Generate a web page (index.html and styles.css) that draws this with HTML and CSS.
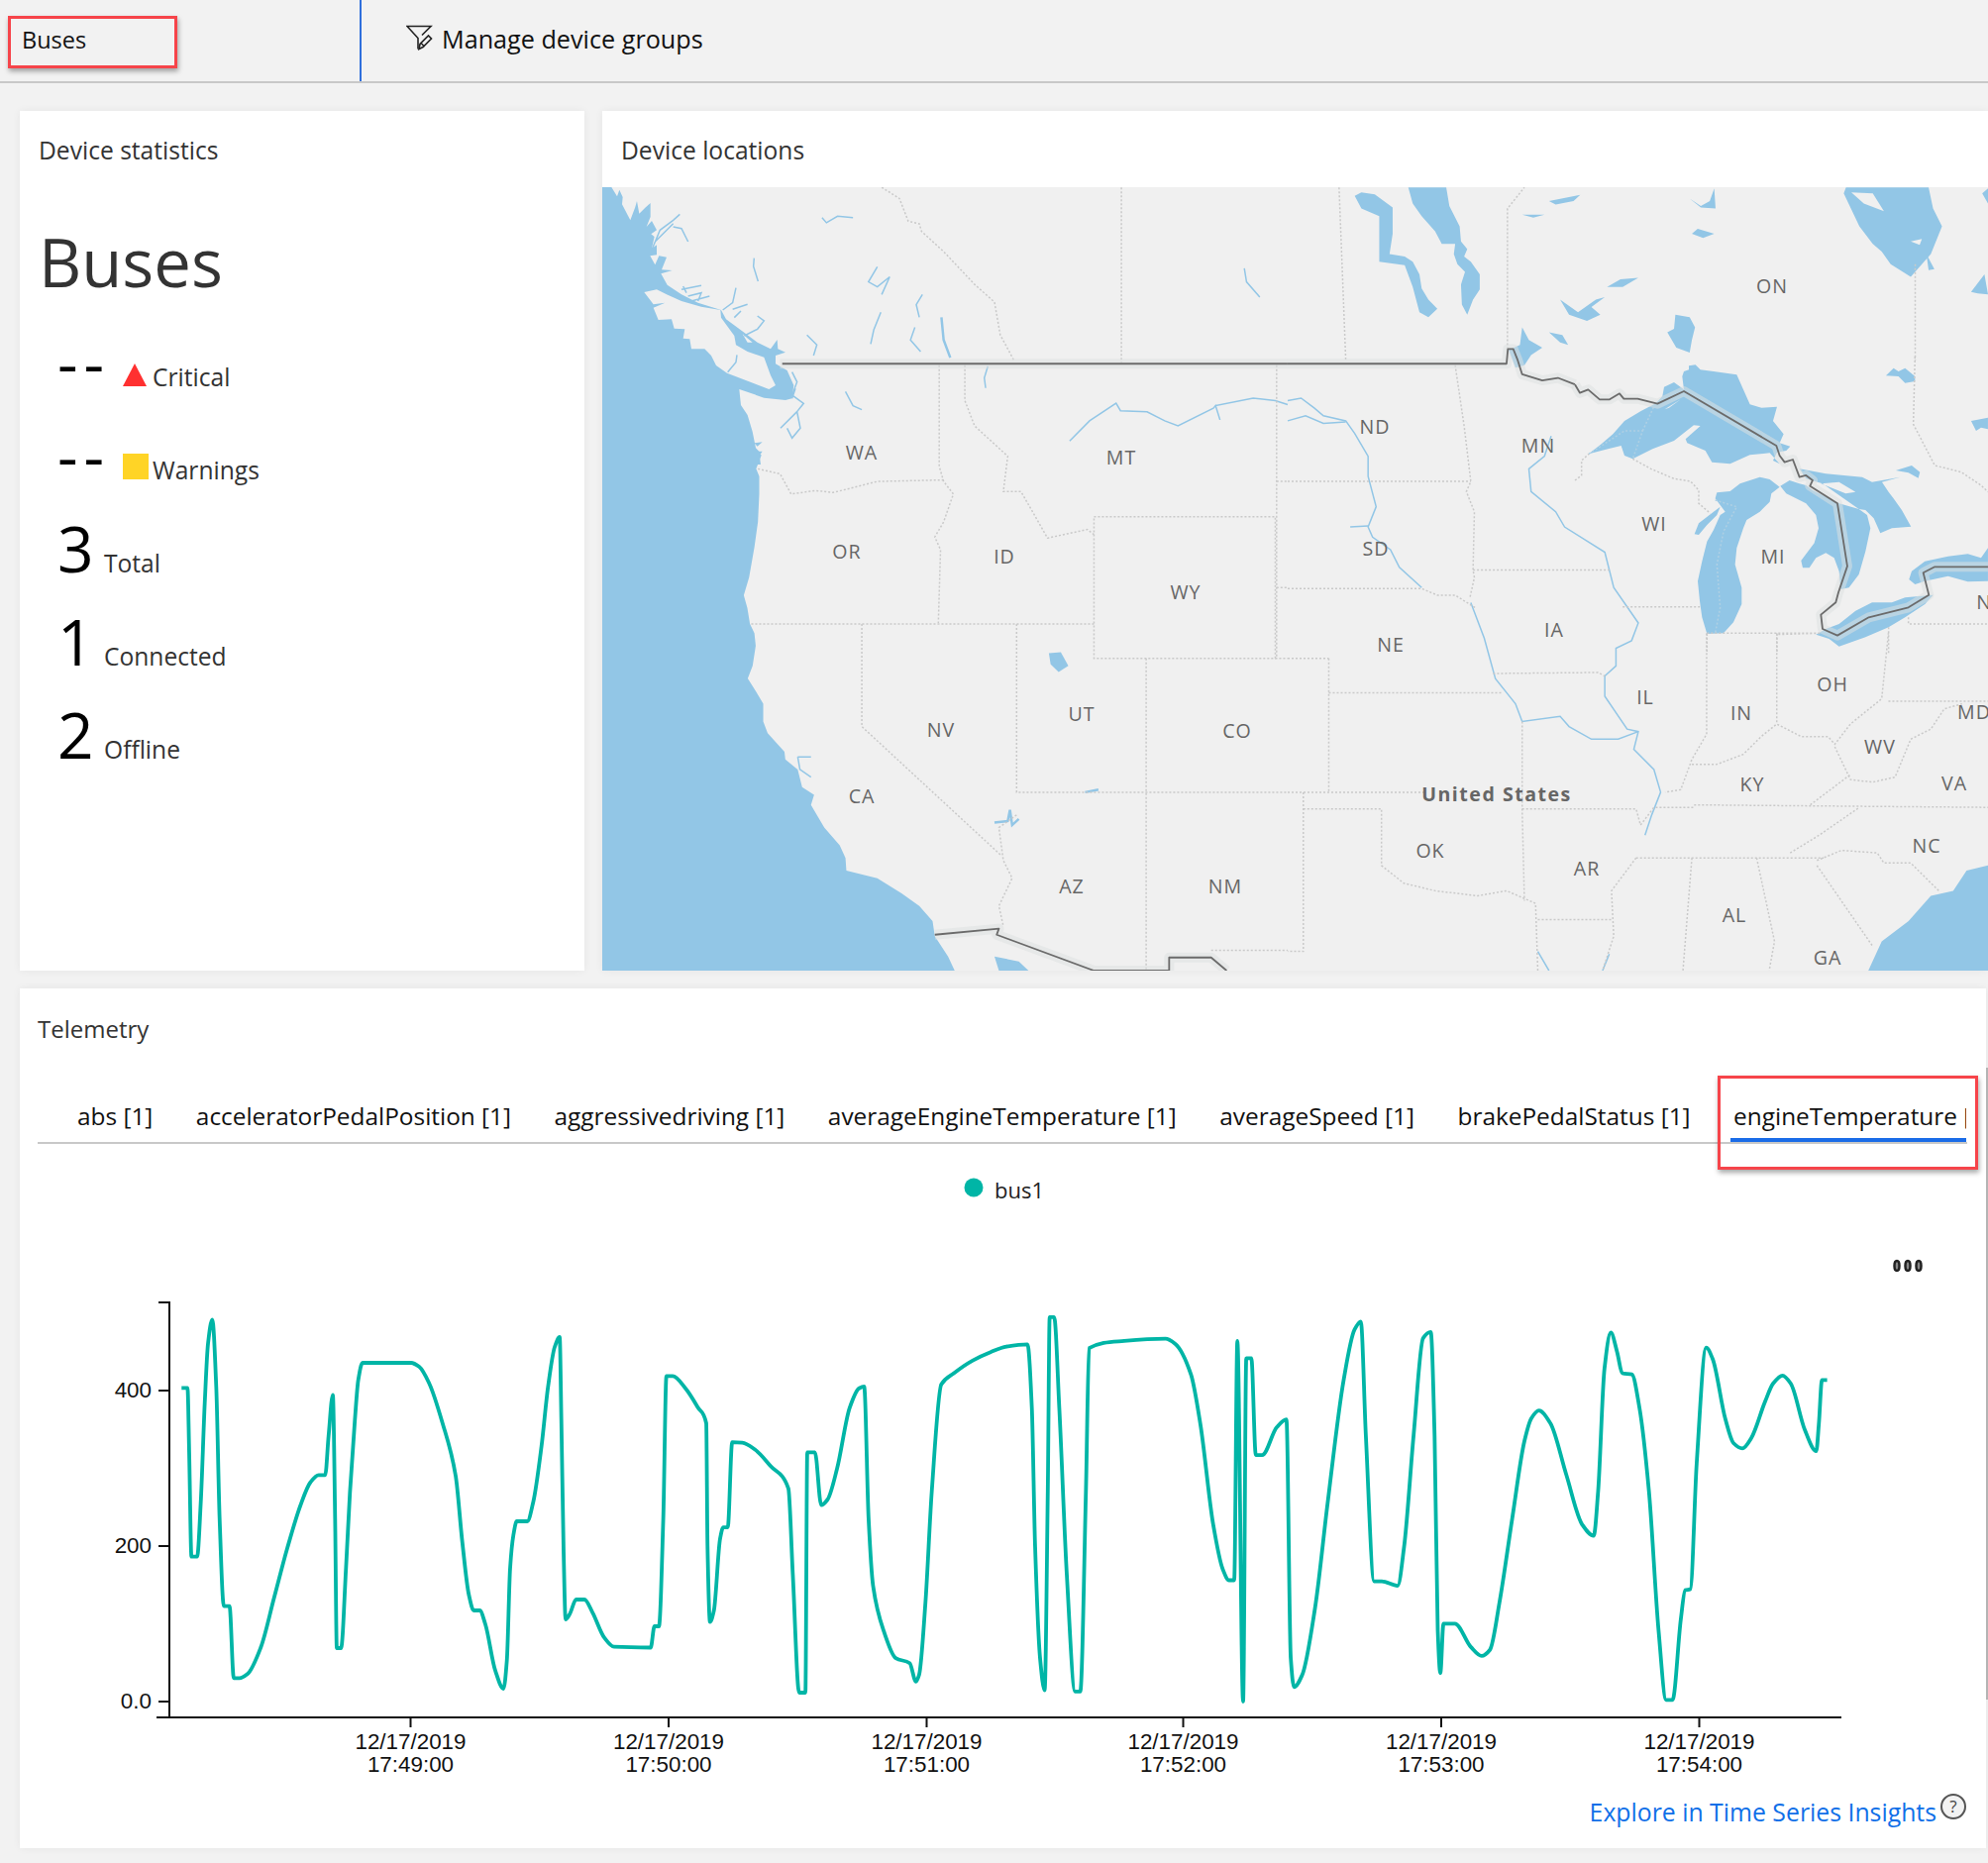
FILE: index.html
```html
<!DOCTYPE html>
<html lang="en">
<head>
  <meta charset="UTF-8">
  <title>Buses</title>
  <link rel="stylesheet" href="styles.css">
</head>
<body>
  <div class="topbar">
    <div class="group-picker">
      <div class="red-box picker-box">Buses</div>
    </div>
    <div class="manage">
      <svg class="filter-icon" width="28" height="26" viewBox="0 0 28 26">
        <path d="M16 10.5l9-9H1l11 12v11"/>
        <path d="M13 24.5l1-5 8.500-8.500 3 3-8.500 8.500z"/>
        <path d="M15 18.500l3.500 3.500"/>
      </svg>
      <span>Manage device groups</span>
    </div>
  </div>

  <div class="top-row">
    <div class="panel stats">
      <div class="panel-title">Device statistics</div>
      <div class="stats-name">Buses</div>
      <div class="stat-row">
        <span class="stat-num dashes">--</span>
        <span class="triangle"></span>
        <span class="stat-label">Critical</span>
      </div>
      <div class="stat-row">
        <span class="stat-num dashes">--</span>
        <span class="square"></span>
        <span class="stat-label">Warnings</span>
      </div>
      <div class="stat-row"><span class="stat-num">3</span><span class="stat-label">Total</span></div>
      <div class="stat-row"><span class="stat-num">1</span><span class="stat-label">Connected</span></div>
      <div class="stat-row"><span class="stat-num">2</span><span class="stat-label">Offline</span></div>
    </div>

    <div class="panel locations">
      <div class="panel-title">Device locations</div>
      <svg class="map" width="1399" height="791" viewBox="608 189 1399 791">
        <!-- pacific northwest -->
        <g transform="translate(608 189) scale(.3333)">
          <path class="water" fill-rule="evenodd" d="M0 0H28L45 28 52 8 62 30 60 52 85 100 100 60 105 42 112 80 130 62 146 48 146 90 134 120 150 102 165 130 148 142 158 150 150 186 165 175 165 205 145 208 160 235 172 208 195 212 180 250 212 252 178 262 197 296 240 325 290 350 360 372 375 400 430 440 470 470 510 490 530 462 532 490 555 500 525 510 525 535 560 555 580 600 575 640 555 645 490 638 415 612 420 660 440 690 455 740 465 790 475 800 480 840H0ZM127 318L165 310 195 325 240 345 300 362 358 372 360 395 400 450 405 478 440 498 490 515 510 570 525 600 505 612 378 563 345 540 330 510 310 490 270 490 265 460 245 458 250 430 218 428 210 400 170 402 155 365 190 350 155 355ZM425 445L455 470 440 470Z"/>
          <path class="river" d="M150 190L175 130 215 100 235 82M215 120L240 125 260 165M160 165L215 110"/>
          <path class="river" d="M245 300L255 320M240 310L300 298M260 330L300 320 290 345M270 345L325 330"/>
          <path class="river" d="M365 372L395 350 405 305M395 370L440 355M400 395L420 375"/>
          <path class="river" d="M470 390L490 405 470 430 430 450"/>
          <path class="river" d="M575 560L590 590 575 630 610 655 590 680 600 730 575 760 560 730M590 680L540 730M575 640L585 610"/>
          <path class="river" d="M460 215L458 240 472 285"/>
          <path class="river" d="M620 448L650 478 640 510"/>
          <path class="river" d="M408 508L405 530 380 560"/>
          <path class="water" d="M460 775L485 772 470 785ZM470 800L485 800 475 815Z"/>
        </g>

        <!-- west half -->
        <g transform="translate(600 180) scale(.4464 .5102)">
          <path class="water" d="M0 540H365L378 548 366 575 373 590 373 625 370 680 362 730 350 790 338 825 346 850 352 882 362 900 365 925 358 965 347 990 365 1015 382 1040 382 1075 392 1098 430 1135 432 1150 460 1170 470 1205 497 1220 490 1240 520 1285 555 1320 568 1345 570 1370 640 1385 695 1415 735 1440 765 1470 770 1500 800 1540 815 1568H0Z"/>
          <path class="water" d="M1028 940L1055 938 1072 965 1050 977 1032 962Z"/>
          <path class="water" d="M905 1540L960 1550 982 1568H915Z"/>
          <path class="river" d="M515 78L525 88 550 75 585 78"/>
          <path class="river" d="M640 175L620 205 640 215 668 195 650 230"/>
          <path class="river" d="M648 265L632 300 625 328"/>
          <path class="river" d="M742 230L728 250 735 275"/>
          <path class="river" d="M725 295L715 320 738 343"/>
          <path class="river wide" d="M785 275L790 320 805 355"/>
          <path class="river" d="M890 372L882 395 885 415"/>
          <path class="river" d="M568 422L585 450 605 458"/>
          <path class="river" d="M1470 178L1475 205 1505 235"/>
          <path class="river" d="M1075 520L1120 480 1180 445 1190 460 1250 462 1290 480 1320 490 1400 455 1405 450 1415 478 1405 450 1490 435 1540 440 1568 448"/>
          <path class="river wide" d="M1110 1215L1140 1210"/>
          <path class="river wide" d="M905 1275L935 1272 940 1250 945 1280 960 1268"/>
          <path class="river" d="M460 1145L465 1170 490 1185M460 1145H490"/>

          <path class="border" d="M650 18L690 40 710 85 735 90 740 105 790 145 860 210 905 245 918 310 950 362"/>
          <path class="border" d="M1192 18V365"/>
          <path class="border" d="M780 370V570L790 600 812 625 790 680 770 710 783 735 778 880"/>
          <path class="border" d="M370 575L420 585 445 625 500 618 540 622 640 600 790 597"/>
          <path class="border" d="M355 882H1130"/>
          <path class="border" d="M605 882V1085L920 1340"/>
          <path class="border" d="M838 370V440L860 490 935 550 925 620 965 620 1025 712 1115 695 1130 705"/>
          <path class="border" d="M1130 670H1540V950H1130Z"/>
          <path class="border" d="M1543 370V950"/>
          <path class="border" d="M1543 600H1568M1543 810H1568"/>
          <path class="border" d="M955 882V1215H1568"/>
          <path class="border" d="M1248 950V1568M1540 950H1568"/>
          <path class="border" d="M955 1260L915 1285 925 1350 945 1385 915 1440 925 1480"/>
          <path class="border" d="M1395 1528H1568"/>

          <path class="national-halo" d="M420 367H1568"/>
          <path class="national" d="M425 367H1568"/>
          <path class="national-halo" d="M770 1497L915 1485 910 1497 1130 1568H1300V1542H1395L1430 1568"/>
          <path class="national" d="M770 1497L915 1485 910 1497 1130 1568H1300V1542H1395L1430 1568"/>
        </g>

        <!-- east half -->
        <g transform="translate(1300 180) scale(.4509 .5102)">
          <path class="water" d="M270 18H355L362 55 385 95 388 125 402 140 395 155 410 165 430 190 430 220 415 240 402 270 390 250 388 210 397 185 380 170 372 150 375 130 345 130 330 105 300 75 280 50Z"/>
          <path class="water" d="M150 35L165 28 195 32 235 58 235 110 228 150 262 155 280 165 295 190 300 218 315 240 335 258 315 275 295 265 280 215 262 172 205 165 205 75 165 60Z"/>
          <path class="water" d="M585 45L655 33 640 45 600 52ZM525 72L575 72 550 78ZM900 40L925 55 945 45 955 20 958 60 925 58ZM905 110L918 100 955 110 930 118Z"/>
          <path class="water" d="M850 305L865 298 868 270 900 275 912 295 905 320 900 345 870 335Z"/>
          <path class="water" d="M610 240L650 265 690 240 710 235 680 255 700 270 670 282 630 270ZM715 215L745 200 785 197 750 215Z"/>
          <path class="water" d="M525 295L540 320 570 335 545 350 530 370 510 375 495 340 520 330ZM585 305L615 310 628 330 610 325Z"/>
          <path class="water" fill-rule="evenodd" d="M1245 30L1250 18H1435L1445 60 1465 95 1440 150 1395 195 1350 170 1330 145 1310 130 1280 95ZM1262 28L1310 30 1335 65 1290 50ZM1395 125L1420 120 1415 132Z"/>
          <path class="water" d="M1430 150L1448 180 1435 182ZM1530 225L1560 190 1568 230 1545 228ZM1555 30L1568 20V50Z"/>
          <path class="water" d="M1300 1568L1330 1510 1390 1470 1440 1420 1490 1410 1520 1370 1568 1360V1568Z"/>

          <path class="river" d="M0 440L30 435 60 455 80 470 130 480 150 505 180 550 180 590 198 650 180 690 190 710 230 735 250 770 300 810"/>
          <path class="river" d="M0 480L40 470 80 485 130 482M140 690L180 688"/>
          <path class="river" d="M590 510L575 550 540 575 545 620 600 660 620 690 710 740 730 810 785 880 770 915 735 930 735 965 710 985 710 1025 760 1090 785 1095 775 1130 820 1170 835 1215 815 1260 800 1300"/>
          <path class="river" d="M410 840L440 910 465 990 510 1040 525 1075 610 1065 630 1085 680 1110 740 1110 785 1095"/>
          <path class="river" d="M560 1530L585 1568M705 1568L720 1535"/>

          <path class="border" d="M115 18L130 360"/>
          <path class="border" d="M492 338V60L530 18"/>
          <path class="border" d="M375 370L395 490 410 600 400 620 418 660 415 775 418 790 408 830"/>
          <path class="border" d="M0 600H410M415 775H720"/>
          <path class="border" d="M0 812H300L335 825H375L420 850"/>
          <path class="border" d="M750 848H970"/>
          <path class="border" d="M938 900V1100L905 1150 880 1210 845 1215"/>
          <path class="border" d="M905 1160H960L1020 1140 1060 1105 1095 1080 1150 1105H1210L1225 1120 1260 1080 1330 1030 1345 900"/>
          <path class="border" d="M1095 900V1080"/>
          <path class="border" d="M1345 1035H1568"/>
          <path class="border" d="M1225 1125L1260 1190 1310 1195 1360 1185 1395 1110 1440 1090 1470 1050 1510 1040"/>
          <path class="border" d="M1170 1240L1260 1180"/>
          <path class="border" d="M910 1240L1568 1245M780 1345H1200"/>
          <path class="border" d="M1125 1335L1190 1300 1280 1245"/>
          <path class="border" d="M1185 1350L1240 1330 1320 1335 1335 1355H1395L1460 1412"/>
          <path class="border" d="M1185 1360L1310 1520"/>
          <path class="border" d="M905 1345L885 1568M1050 1345L1090 1510 1078 1568"/>
          <path class="border" d="M780 1345L725 1410 730 1500 705 1568"/>
          <path class="border" d="M92 1018H480M92 950V1215M0 950H92"/>
          <path class="border" d="M460 980L695 978 710 985"/>
          <path class="border" d="M0 1215H310M35 1248H210V1360L260 1395 330 1410 425 1420 490 1410 555 1435 560 1568"/>
          <path class="border" d="M35 1215V1530H0"/>
          <path class="border" d="M525 1075V1250L530 1430M525 1248H780L790 1280 820 1245H910"/>
          <path class="border" d="M560 1467H725"/>
          <path class="border" d="M1405 170V360"/>

          <path class="national-halo" d="M0 367H490L493 338H505L515 360 525 388 570 400 605 395 643 408"/>
          <path class="national" d="M0 367H490L493 338H505L515 360 525 388 570 400 605 395 643 408"/>
        </g>

        <!-- great lakes -->
        <g transform="translate(1590 360) scale(.3333)">
          <path class="water" d="M42 295L80 265 115 235 150 195 200 165 245 142 265 120 270 92 300 78 330 100 325 60 330 45 345 40 345 28 365 25 380 40 420 45 490 55 510 100 530 145 565 155 612 152 600 195 632 235 620 262 652 272 640 285 612 290 600 315 620 325 590 292 530 298 470 325 415 320 395 285 340 262 335 250 380 210 360 208 300 255 235 280 175 310 150 300 140 270 100 280Z"/>
          <path class="land" d="M272 160L320 130 285 155Z"/>
          <path class="water" d="M400 840L385 790 378 740 372 680 385 620 400 560 420 525 440 480 455 470 425 430 430 412 470 408 500 385 560 365 590 372 620 395 595 415 590 440 560 470 520 495 510 520 490 580 485 630 505 700 505 750 480 805 450 838Z"/>
          <path class="water" d="M362 538L375 505 420 470 440 455 430 480 400 510 375 540Z"/>
          <path class="water" d="M622 392L650 375 680 385 700 390 720 405 800 445 860 462 885 480 895 520 880 590 860 660 830 700 805 705 800 650 785 610 760 595 730 610 710 640 690 640 685 618 725 565 738 520 730 480 700 445 640 415Z"/>
          <path class="water" fill-rule="evenodd" d="M680 340L760 355 870 365 900 380 930 375 985 365 930 380 950 410 965 430 990 465 1018 515 960 520 925 535 905 490 880 465 860 462 800 420 750 385 700 370ZM745 385L800 380 850 410 820 415Z"/>
          <path class="water" d="M972 345L1020 330 1045 350 1040 368 1010 352Z"/>
          <path class="water" d="M730 842L760 825 800 810 850 770 900 745 960 745 1000 730 1085 722 1060 750 1000 790 950 820 880 850 800 878 770 855Z"/>
          <path class="water" d="M1012 675L1020 650 1060 620 1130 605 1190 598 1230 610 1251 580V680L1190 682 1130 665 1060 680 1030 690Z"/>
          <path class="water" d="M942 58L965 35 980 45 1000 35 1030 60V75L1000 80 980 60Z"/>
          <path class="water" d="M1200 195L1251 185V220L1230 215 1215 225Z"/>

          <path class="border on-water" d="M42 295L150 225H205L175 310M205 225L240 150"/>
          <path class="border on-water" d="M425 435L490 455 450 530 430 630 440 760 425 838"/>
          <path class="border" d="M175 310L230 340 300 370 350 378 375 405V445L410 475"/>
          <path class="border" d="M0 375L20 360V315L42 295"/>
          <path class="border" d="M400 838H745L610 842M400 840V900M612 840V900M950 820V900"/>
          <path class="border" d="M1010 790V810H1251"/>
          <path class="border" d="M1030 0L1025 205 1090 330 1170 350 1230 390 1251 410"/>

          <path class="national-halo" d="M0 85L15 110 40 100 75 130H105L135 112 148 128H190L250 143 330 105 610 270 620 300 635 320 660 312 680 365 700 360 720 375 712 392 795 445 825 635 798 715 790 745 745 782 750 825 795 845 890 790 1010 760 1072 722 1055 655 1090 637H1251"/>
          <path class="national" d="M0 85L15 110 40 100 75 130H105L135 112 148 128H190L250 143 330 105 610 270 620 300 635 320 660 312 680 365 700 360 720 375 712 392 795 445 825 635 798 715 790 745 745 782 750 825 795 845 890 790 1010 760 1072 722 1055 655 1090 637H1251"/>
        </g>

        <g class="map-labels">
          <text x="870" y="456">WA</text>
          <text x="855" y="556">OR</text>
          <text x="1014" y="561">ID</text>
          <text x="1132" y="461">MT</text>
          <text x="1197" y="597">WY</text>
          <text x="950" y="736">NV</text>
          <text x="1092" y="720">UT</text>
          <text x="1249" y="737">CO</text>
          <text x="870" y="803">CA</text>
          <text x="1082" y="894">AZ</text>
          <text x="1237" y="894">NM</text>
          <text x="1789" y="288">ON</text>
          <text x="1388" y="430">ND</text>
          <text x="1553" y="449">MN</text>
          <text x="1670" y="528">WI</text>
          <text x="1790" y="561">MI</text>
          <text x="1389" y="553">SD</text>
          <text x="1404" y="650">NE</text>
          <text x="1569" y="635">IA</text>
          <text x="1661" y="703">IL</text>
          <text x="1758" y="719">IN</text>
          <text x="1850" y="690">OH</text>
          <text x="1898" y="753">WV</text>
          <text x="1769" y="791">KY</text>
          <text x="1973" y="790">VA</text>
          <text x="1993" y="718">MD</text>
          <text x="2009" y="607">NY</text>
          <text x="1945" y="853">NC</text>
          <text x="1751" y="923">AL</text>
          <text x="1845" y="966">GA</text>
          <text x="1602" y="876">AR</text>
          <text x="1444" y="858">OK</text>
          <text class="country" x="1511" y="801">United States</text>
        </g>
      </svg>
    </div>
  </div>

  <div class="panel telemetry">
    <div class="panel-title">Telemetry</div>
    <div class="tabs">
      <div class="tab">abs [1]</div>
      <div class="tab">acceleratorPedalPosition [1]</div>
      <div class="tab">aggressivedriving [1]</div>
      <div class="tab">averageEngineTemperature [1]</div>
      <div class="tab">averageSpeed [1]</div>
      <div class="tab">brakePedalStatus [1]</div>
      <div class="tab active">engineTemperature [1]</div>
    </div>
    <div class="red-box tab-box"></div>

    <svg class="chart" width="1985" height="640" viewBox="20 1160 1985 640">
      <circle class="legend-dot" cx="983" cy="1199" r="9.500"/>
      <text class="legend-text" x="1004" y="1210">bus1</text>
      <g class="more">
        <ellipse cx="1915" cy="1278" rx="2.500" ry="5"/>
        <ellipse cx="1926" cy="1278" rx="2.500" ry="5"/>
        <ellipse cx="1937" cy="1278" rx="2.500" ry="5"/>
      </g>

      <path class="axis" d="M160 1315H171V1734M158 1734H1859"/>
      <path class="axis" d="M160 1404H171M160 1561H171M160 1718H171"/>
      <path class="axis" d="M414.500 1734V1744M675 1734V1744M935.500 1734V1744M1194.500 1734V1744M1455 1734V1744M1715.500 1734V1744"/>
      <g class="y-labels">
        <text x="153" y="1411">400</text>
        <text x="153" y="1568">200</text>
        <text x="153" y="1725">0.0</text>
      </g>
      <g class="x-labels">
        <text x="414.500" y="1766">12/17/2019</text><text x="414.500" y="1789">17:49:00</text>
        <text x="675" y="1766">12/17/2019</text><text x="675" y="1789">17:50:00</text>
        <text x="935.500" y="1766">12/17/2019</text><text x="935.500" y="1789">17:51:00</text>
        <text x="1194.500" y="1766">12/17/2019</text><text x="1194.500" y="1789">17:52:00</text>
        <text x="1455" y="1766">12/17/2019</text><text x="1455" y="1789">17:53:00</text>
        <text x="1715.500" y="1766">12/17/2019</text><text x="1715.500" y="1789">17:54:00</text>
      </g>
      <path id="line" class="line"/>
    </svg>

    <div class="explore">
      <a class="explore-link">Explore in Time Series Insights</a>
      <span class="help">?</span>
    </div>
  </div>

  <script>
    const points = [
      [183.3,1401.3],[189.3,1401.3],[191,1466.7],[193.3,1571.7],[199,1571.7],[202.7,1516.7],[206.7,1416.7],[210,1356.7],[214.3,1332.3],
      [218.3,1400],[221.7,1533],[226,1621.7],[231.7,1621.7],[236,1694.3],[241.7,1694.3],[250,1690],[263.3,1663.3],[276.7,1613.3],
      [290,1563.3],[303.3,1520],[313.3,1496.7],[321.7,1489.3],[328.3,1489.3],[331.7,1450],[336,1408.3],[338.3,1533],[340,1664],
      [344.3,1664],[349.3,1583.3],[353.3,1506.7],[358.3,1433.3],[361.7,1393.3],[366,1376],[415,1376],[423.3,1380],[433.3,1396.7],
      [446.7,1436.7],[460,1490],[466.7,1556.7],[473.3,1610],[478.3,1626],[484.3,1626],[490,1640],[500,1686.7],[508.3,1705],
      [511.7,1676.7],[515,1583.3],[518.3,1550],[521.7,1536],[532.3,1536],[538.3,1516.7],[546.7,1460],[553.3,1400],[560,1360],
      [565,1350],[566.7,1433.3],[569,1566.7],[571,1635],[575,1630],[581.7,1615],[590,1615],[598.3,1628.3],[610,1653.3],[620,1662.7],
      [656.9,1663.5],[660.7,1642],[665.2,1642],[669.6,1533.7],[672.8,1389.3],[679.2,1389.3],[692,1401.7],[704.7,1421.3],[713,1437],
      [714.3,1561.8],[716.8,1637.6],[720.7,1626.4],[727,1553.4],[730.2,1542.1],[734.7,1542.1],[739.2,1456.2],[749.4,1456.7],
      [762.1,1463.5],[778,1480.3],[795.9,1502.8],[800.4,1589.9],[806.8,1709],[813.1,1709],[815,1466.3],[822.7,1466.3],[829.1,1519.7],
      [835.5,1514],[845,1483.1],[857.8,1421.3],[867.3,1401.7],[872.4,1400],[876.9,1533.7],[881.4,1601.1],[892.9,1648.9],[904.3,1674.2],
      [918.4,1679.2],[924.7,1697.8],[927.9,1691],[934.3,1618],[940.7,1505.6],[950.3,1397.8],[963,1386.5],[982.1,1373.6],[1000,1365.2],
      [1016,1359.6],[1037.3,1357.3],[1041.7,1421.3],[1045,1561.8],[1050,1674.2],[1054.6,1706.7],[1057.8,1505.6],[1059.7,1329.8],
      [1064.2,1329.8],[1069.4,1421.3],[1077,1589.9],[1085.4,1707.9],[1090.6,1707.9],[1096.3,1505.6],[1099.5,1361.2],[1134.9,1353.9],
      [1176.6,1351.7],[1186.3,1356.7],[1202.3,1387.6],[1211.9,1438.2],[1224.8,1539.3],[1234.4,1584.3],[1240.8,1595.5],[1246,1595.5],
      [1249.2,1353.9],[1255,1718],[1258.2,1371.3],[1263.3,1371.3],[1267.8,1469.1],[1274.2,1469.1],[1289,1441],[1298.7,1433.1],
      [1303.1,1674.2],[1306.4,1703.4],[1314.7,1691],[1327.6,1623.6],[1340.4,1516.9],[1356.5,1393.3],[1367.4,1342.7],[1373.8,1334.3],
      [1378.9,1449.4],[1387.3,1596.6],[1395,1596.6],[1411,1601.1],[1417.5,1561.8],[1427.1,1449.4],[1436.7,1351.1],[1444.4,1344.9],
      [1448.3,1449.4],[1451.5,1646],[1454.1,1689.3],[1457.3,1639.3],[1468.8,1639.3],[1484.9,1662.9],[1495.8,1671.9],[1504.2,1665.7],
      [1513.8,1618],[1526.6,1533.7],[1539,1455],[1546,1432],[1553.6,1424.2],[1565.2,1437],[1581.2,1488.8],[1597.3,1539.3],[1608.9,1550.6],
      [1613.4,1505.6],[1619.8,1382],[1626.2,1345.5],[1632.6,1365.2],[1637.8,1386.5],[1647.4,1387.6],[1655.1,1421.3],[1664.7,1505.6],
      [1674.4,1646],[1682.1,1716.3],[1688.5,1716.3],[1696.9,1634.8],[1701.3,1605.6],[1706.5,1604.5],[1712.9,1477.5],[1722.5,1360.7],
      [1729,1372],[1741.8,1432.6],[1750,1457],[1759.1,1462.4],[1768,1452],[1782,1415],[1790,1397],[1799.6,1388.8],[1807.9,1397],
      [1822.1,1443.8],[1833.6,1465.2],[1836.2,1438.2],[1839.4,1393.3],[1844.6,1393.3]
    ];

    // monotone cubic through the samples, same curve the chart lib draws
    function monotonePath(pts) {
      const n = pts.length;
      const slopes = [];
      for (let i = 0; i < n - 1; i++) {
        slopes.push((pts[i + 1][1] - pts[i][1]) / (pts[i + 1][0] - pts[i][0]));
      }
      const tangents = [slopes[0]];
      for (let i = 1; i < n - 1; i++) {
        if (slopes[i - 1] * slopes[i] <= 0) {
          tangents.push(0);
        } else {
          const h0 = pts[i][0] - pts[i - 1][0];
          const h1 = pts[i + 1][0] - pts[i][0];
          const w = (h0 + h1) * 3;
          tangents.push(w / ((2 * h1 + h0) / slopes[i - 1] + (2 * h0 + h1) / slopes[i]));
        }
      }
      tangents.push(slopes[n - 2]);
      let d = 'M' + pts[0][0] + ' ' + pts[0][1];
      for (let i = 0; i < n - 1; i++) {
        const h = (pts[i + 1][0] - pts[i][0]) / 3;
        d += ' C' + (pts[i][0] + h) + ' ' + (pts[i][1] + h * tangents[i]) + ' ' +
          (pts[i + 1][0] - h) + ' ' + (pts[i + 1][1] - h * tangents[i + 1]) + ' ' +
          pts[i + 1][0] + ' ' + pts[i + 1][1];
      }
      return d;
    }

    document.getElementById('line').setAttribute('d', monotonePath(points));
  </script>
</body>
</html>
```

FILE: styles.css
```css
body {
  margin: 0;
  width: 2007px;
  height: 1881px;
  overflow: hidden;
  background: #f2f2f2;
  color: #333;
  font-family: "Open Sans", "Noto Sans", sans-serif;
  font-size: 24.600px;
}
.topbar {
  display: flex;
  height: 82px;
  border-bottom: 2px solid #c8c8c8;
}
.group-picker {
  width: 365px;
  border-right: 2px solid #2f6fdc;
  padding: 16px 0 0 8px;
  box-sizing: border-box;
  color: #111;
}
.red-box {
  border: 3px solid #f6444a;
  box-shadow: 1px 3px 5px rgba(0, 0, 0, 0.35);
  box-sizing: border-box;
}
.picker-box {
  width: 171px;
  height: 53px;
  padding-left: 11px;
  font-size: 23.500px;
  line-height: 42px;
}
.manage {
  display: flex;
  align-items: center;
  gap: 8px;
  padding: 0 0 5px 45px;
  color: #111;
  font-size: 25.200px;
}
.filter-icon {
  fill: none;
  stroke: #222;
  stroke-width: 1.6;
  margin-top: -2px;
}
.top-row {
  display: flex;
  gap: 18px;
  padding: 28px 0 0 20px;
  height: 868px;
}
.panel {
  background: #fff;
  box-shadow: 0 0 8px rgba(0, 0, 0, 0.06);
  box-sizing: border-box;
}
.panel-title {
  padding: 20px 0 0 19px;
  line-height: 40px;
  height: 77px;
  box-sizing: border-box;
}
.stats {
  width: 570px;
  flex: none;
}
.stats-name {
  margin: 30px 0 10px 19px;
  font-size: 67px;
  line-height: 90px;
}
.stat-row {
  display: flex;
  align-items: baseline;
  height: 94px;
  padding-left: 38px;
}
.stat-num {
  font-size: 64px;
  line-height: 94px;
  color: #000;
  width: 47px;
}
.dashes {
  width: 66px;
  letter-spacing: 6px;
}
.triangle {
  width: 0;
  height: 0;
  border-left: 12px solid transparent;
  border-right: 12px solid transparent;
  border-bottom: 23px solid #ff3030;
  margin-right: 6px;
}
.square {
  width: 26px;
  height: 26px;
  background: #ffd426;
  margin-right: 4px;
}
.stat-label {
  white-space: nowrap;
}
.locations {
  width: 1399px;
  flex: none;
}
.map {
  display: block;
  background: #f0f0f0;
}
.water {
  fill: #92c6e6;
}
.land {
  fill: #f0f0f0;
}
.river {
  fill: none;
  stroke: #92c6e6;
  stroke-width: 1.5;
  vector-effect: non-scaling-stroke;
}
.river.wide {
  stroke-width: 2.5;
}
.border {
  fill: none;
  stroke: #c9c9c9;
  stroke-width: 1.5;
  stroke-dasharray: 2 2;
  vector-effect: non-scaling-stroke;
}
.border.on-water {
  stroke: #afd0e4;
}
.national {
  fill: none;
  stroke: #6b6b6b;
  stroke-width: 1.8;
  stroke-linejoin: round;
  vector-effect: non-scaling-stroke;
}
.national-halo {
  fill: none;
  stroke: rgba(221, 224, 224, 0.52);
  stroke-width: 10;
  stroke-linejoin: round;
  vector-effect: non-scaling-stroke;
}
.map-labels text {
  fill: #666;
  font-size: 19.600px;
  letter-spacing: 1px;
  text-anchor: middle;
  dominant-baseline: central;
}
.map-labels .country {
  font-weight: 700;
  letter-spacing: 1.5px;
}
.telemetry {
  position: relative;
  width: 1985px;
  height: 868px;
  margin: 18px 0 0 20px;
}
.telemetry::after {
  content: "";
  position: absolute;
  right: -2px;
  top: 80px;
  bottom: 150px;
  width: 2px;
  background: #b4b4b4;
}
.telemetry .panel-title {
  padding: 21px 0 0 18px;
  height: 105px;
  font-size: 24px;
}
.tabs {
  display: flex;
  gap: 43.500px;
  margin-left: 18px;
  padding-left: 40px;
  width: 1948px;
  box-sizing: border-box;
  height: 52px;
  border-bottom: 2px solid #c8c8c8;
  color: #111;
  font-size: 24.400px;
}
.tab {
  line-height: 48px;
  white-space: nowrap;
}
.tab.active {
  width: 238px;
  overflow: hidden;
  flex: none;
  height: 50px;
  box-sizing: border-box;
  border-bottom: 4px solid #1a6ce8;
  margin-left: -3px;
  padding-left: 3px;
}
.tab-box {
  position: absolute;
  left: 1714px;
  top: 88px;
  width: 263px;
  height: 95px;
}
.chart {
  display: block;
  margin-top: 5px;
}
.legend-dot {
  fill: #00b5a6;
}
.legend-text {
  font-size: 22px;
  fill: #222;
}
.more ellipse {
  fill: #888;
  stroke: #222;
  stroke-width: 2.5;
}
.axis {
  fill: none;
  stroke: #111;
  stroke-width: 2;
}
.y-labels text,
.x-labels text {
  font-family: "Liberation Sans", Arial, sans-serif;
  font-size: 22.400px;
  fill: #111;
}
.y-labels text {
  text-anchor: end;
}
.x-labels text {
  text-anchor: middle;
}
.line {
  fill: none;
  stroke: #00b5a6;
  stroke-width: 3.800;
  stroke-linejoin: round;
}
.explore {
  display: flex;
  justify-content: flex-end;
  gap: 4px;
  padding-right: 20px;
  margin-top: 11px;
}
.explore-link {
  margin-top: 1px;
  color: #0f6fe8;
  font-size: 24.800px;
}
.help {
  width: 22px;
  height: 22px;
  border: 2px solid #555;
  border-radius: 50%;
  background: #f2f2f2;
  color: #444;
  font-size: 17px;
  line-height: 22px;
  text-align: center;
}
```
